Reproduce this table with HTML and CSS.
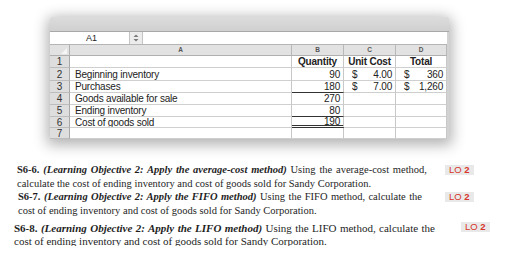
FILE: index.html
```html
<!DOCTYPE html>
<html>
<head>
<meta charset="utf-8">
<link rel="stylesheet" href="styles.css">
</head>
<body>
<div class="page">
  <div class="window">
    <div class="toolbar"></div>
    <div class="formula-row">
      <div class="namebox">A1</div>
      <div class="stepper">
        <svg width="6" height="8" viewBox="0 0 6 8"><path d="M3 0.5 L5.5 3 H0.5 Z M3 7.5 L5.5 5 H0.5 Z" fill="#7a7a7a"/></svg>
      </div>
      <div class="formula"></div>
    </div>
    <div class="grid">
      <div class="corner"><span class="tri"></span></div>
      <div class="colhead">A</div>
      <div class="colhead">B</div>
      <div class="colhead">C</div>
      <div class="colhead">D</div>

      <div class="rowhead r1">1</div>
      <div class="cell r1"></div>
      <div class="cell r1 bold center">Quantity</div>
      <div class="cell r1 bold center">Unit Cost</div>
      <div class="cell r1 bold center">Total</div>

      <div class="rowhead r2">2</div>
      <div class="cell r2 label">Beginning inventory</div>
      <div class="cell r2 num">90</div>
      <div class="cell r2 acct"><span>$</span><span>4.00</span></div>
      <div class="cell r2 acct"><span>$</span><span>360</span></div>

      <div class="rowhead r3">3</div>
      <div class="cell r3 label">Purchases</div>
      <div class="cell r3 num under">180</div>
      <div class="cell r3 acct"><span>$</span><span>7.00</span></div>
      <div class="cell r3 acct"><span>$</span><span>1,260</span></div>

      <div class="rowhead r4">4</div>
      <div class="cell r4 label">Goods available for sale</div>
      <div class="cell r4 num">270</div>
      <div class="cell r4"></div>
      <div class="cell r4"></div>

      <div class="rowhead r5">5</div>
      <div class="cell r5 label">Ending inventory</div>
      <div class="cell r5 num under">80</div>
      <div class="cell r5"></div>
      <div class="cell r5"></div>

      <div class="rowhead r6">6</div>
      <div class="cell r6 label">Cost of goods sold</div>
      <div class="cell r6 num double">190</div>
      <div class="cell r6"></div>
      <div class="cell r6"></div>

      <div class="rowhead r7">7</div>
      <div class="cell r7"></div>
      <div class="cell r7"></div>
      <div class="cell r7"></div>
      <div class="cell r7"></div>
    </div>
  </div>

  <div class="problems">
    <div class="problem p6">
      <div class="text">
        <div class="line first"><b>S6-6.</b> <b><i>(Learning Objective 2: Apply the average-cost method)</i></b> Using the average-cost method,</div>
        <div class="line">calculate the cost of ending inventory and cost of goods sold for Sandy Corporation.</div>
      </div>
      <div class="lo">LO <b>2</b></div>
    </div>
    <div class="problem p7">
      <div class="text">
        <div class="line first"><b>S6-7.</b> <b><i>(Learning Objective 2: Apply the FIFO method)</i></b> Using the FIFO method, calculate the</div>
        <div class="line">cost of ending inventory and cost of goods sold for Sandy Corporation.</div>
      </div>
      <div class="lo">LO <b>2</b></div>
    </div>
    <div class="problem p8">
      <div class="text">
        <div class="line first"><b>S6-8.</b> <b><i>(Learning Objective 2: Apply the LIFO method)</i></b> Using the LIFO method, calculate the</div>
        <div class="line">cost of ending inventory and cost of goods sold for Sandy Corporation.</div>
      </div>
      <div class="lo">LO <b>2</b></div>
    </div>
  </div>
</div>
</body>
</html>
```
FILE: styles.css
```css
html, body {
  margin: 0;
  padding: 0;
  background: #ffffff;
}
.page {
  width: 506px;
  height: 254px;
  overflow: hidden;
  padding: 17px 0 0 50px;
  box-sizing: border-box;
  font-family: "Liberation Sans", Arial, sans-serif;
}
.window {
  width: 399px;
  background: #d2d2d2;
  border-radius: 4px 4px 0 0;
  box-shadow: 0 3px 14px 3px rgba(0, 0, 0, 0.30);
}
.toolbar {
  height: 14px;
  border-radius: 4px 4px 0 0;
  background: linear-gradient(#dcdcdc, #d0d0d0);
  border-bottom: 1px solid #a9a9a9;
}
.formula-row {
  display: flex;
  height: 12px;
  background: #fff;
  border-bottom: 1px solid #b5b5b5;
  margin-right: 2px;
}
.namebox {
  width: 80px;
  font-size: 9px;
  line-height: 12px;
  text-align: center;
  color: #222;
  border-right: 1px solid #c4c4c4;
  padding-left: 4px;
  box-sizing: border-box;
}
.stepper {
  width: 12px;
  background: #ececec;
  border-right: 1px solid #c4c4c4;
  display: flex;
  align-items: center;
  justify-content: center;
}
.formula {
  flex: 1;
}
.grid {
  display: grid;
  grid-template-columns: 20px 222px 52px 52px 51px;
  grid-template-rows: 11px 12px 13px 12px 12px 12px 11px 11px;
  margin-right: 2px;
  font-size: 10px;
  letter-spacing: -0.2px;
  color: #222;
}
.grid > div {
  box-sizing: border-box;
  border-right: 1px solid #c8c8c8;
  border-bottom: 1px solid #cfcfcf;
  white-space: nowrap;
  overflow: hidden;
}
.corner {
  background: #e2e2e2;
  position: relative;
  border-right-color: #b0b0b0 !important;
  border-bottom-color: #b0b0b0 !important;
}
.tri {
  position: absolute;
  right: 2px;
  bottom: 1px;
  width: 0;
  height: 0;
  border-left: 6px solid transparent;
  border-bottom: 6px solid #f6f6f6;
}
.colhead {
  background: #e2e2e2;
  font-size: 6.5px;
  font-weight: bold;
  color: #555;
  text-align: center;
  line-height: 10px;
  letter-spacing: 0;
  border-right-color: #b8b8b8 !important;
  border-bottom-color: #b0b0b0 !important;
}
.rowhead {
  background: #dedede;
  text-align: center;
  color: #333;
  font-size: 10px;
  border-right-color: #a8a8a8 !important;
  border-bottom-color: #bdbdbd !important;
  display: flex;
  align-items: center;
  justify-content: center;
}
.cell {
  background: #fff;
  display: flex;
  align-items: center;
  padding: 0 3px;
}
.label {
  padding-left: 5px;
}
.bold {
  font-weight: bold;
}
.center {
  justify-content: center;
}
.num {
  justify-content: flex-end;
}
.acct {
  justify-content: space-between;
  padding: 0 3px 0 8px;
}
.grid > .under {
  border-bottom: 1px solid #333;
}
.grid > .double {
  border-bottom: 3px double #333;
}

.problems {
  margin-top: 24px;
  margin-left: -50px;
  height: 83px;
  overflow: hidden;
  font-family: "Liberation Serif", "Times New Roman", serif;
  color: #1e1e1e;
}
.problem {
  display: flex;
  align-items: flex-start;
}
.line {
  white-space: nowrap;
}
.line.first {
  white-space: normal;
  text-align: justify;
  text-align-last: justify;
}
.lo {
  font-family: "Liberation Sans", Arial, sans-serif;
  font-size: 9.5px;
  line-height: 10px;
  color: #d8352c;
  background: #e9e9e9;
  padding: 0 4px;
  margin-top: 2px;
}
.p6 {
  padding-left: 17px;
  font-size: 10.5px;
  line-height: 13.5px;
}
.p6 .text {
  width: 428px;
}
.p6 .first {
  width: 410px;
}
.p7 {
  padding-left: 18px;
  font-size: 10.5px;
  line-height: 14px;
}
.p7 .text {
  width: 427px;
}
.p7 .first {
  width: 404px;
}
.p8 {
  padding-left: 14px;
  font-size: 11px;
  line-height: 12.5px;
  margin-top: 4px;
}
.p8 .text {
  width: 447px;
}
.p8 .first {
  width: 421px;
}
.p8 .lo {
  margin-top: 0;
}
```
